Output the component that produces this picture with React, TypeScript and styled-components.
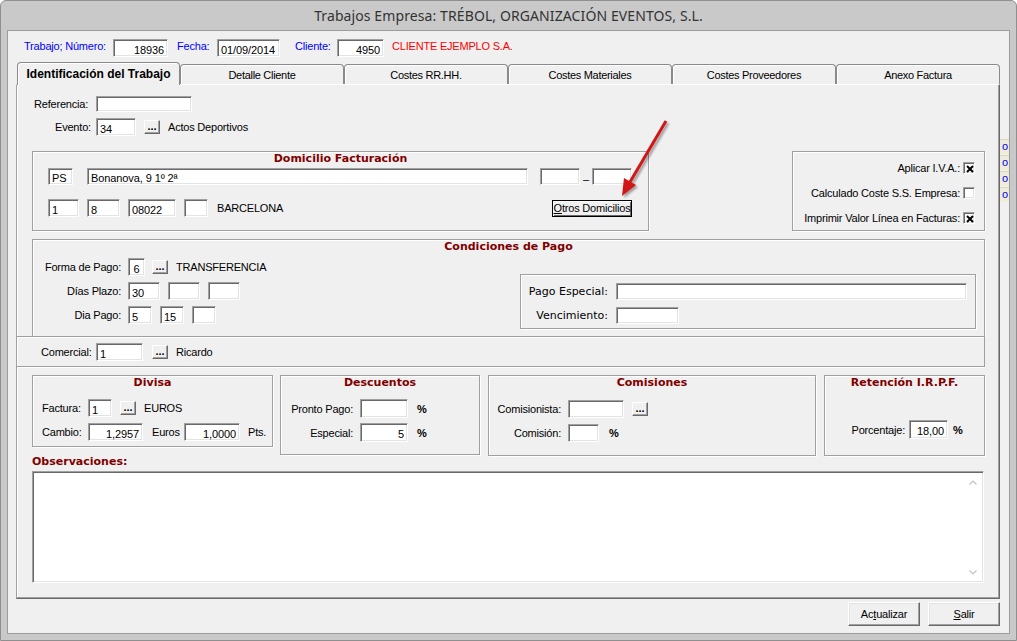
import React from "react";
import styled, { createGlobalStyle } from "styled-components";

const Global = createGlobalStyle`
  html, body { margin: 0; padding: 0; background: #ffffff; }
  body { font-family: "Liberation Sans", Arial, sans-serif; font-size: 11px; color: #000; }
  * { box-sizing: border-box; }
`;

const Window = styled.div`
  position: relative;
  width: 1017px;
  height: 641px;
  background: #c9c9c9;
  border: 1px solid #8f8f8f;
  border-radius: 6px 6px 0 0;
  display: flex;
  flex-direction: column;
  overflow: hidden;
`;

const TitleBar = styled.div`
  height: 29px;
  flex: none;
  display: flex;
  align-items: center;
  justify-content: center;
  font-family: "Noto Sans", "Open Sans", sans-serif;
  font-size: 14px;
  letter-spacing: 0.1px;
  color: #333;
  padding-bottom: 1px;
`;

const ClientWrap = styled.div`
  flex: 1;
  display: flex;
  padding: 0 6px 6px 6px;
`;

const Client = styled.div`
  flex: 1;
  background: #f0f0f0;
  border: 1px solid #9c9c9c;
  display: flex;
  flex-direction: column;
`;

const Header = styled.div`
  margin-top: 8px;
  height: 18px;
  padding-left: 16px;
  display: flex;
  align-items: center;
`;

const HeaderLabel = styled.span<{ $w?: number; $red?: boolean; $ml?: number }>`
  width: ${(p) => (p.$w ? `${p.$w}px` : "auto")};
  margin-left: ${(p) => p.$ml ?? 0}px;
  flex: none;
  color: ${(p) => (p.$red ? "#ff0000" : "#0000ff")};
  white-space: nowrap;
  letter-spacing: -0.2px;
  margin-bottom: 5px;
`;

const Main = styled.div`
  margin-top: 5px;
  display: flex;
  padding-left: 8px;
`;

const TabColumn = styled.div`
  width: 984px;
  display: flex;
  flex-direction: column;
`;

const TabStrip = styled.div`
  height: 22px;
  display: flex;
  align-items: flex-end;
  padding-left: 1px;
`;

const Tab = styled.div<{ $active?: boolean; $w: number }>`
  position: relative;
  z-index: ${(p) => (p.$active ? 2 : 1)};
  width: ${(p) => p.$w}px;
  height: ${(p) => (p.$active ? 23 : 20)}px;
  margin-bottom: ${(p) => (p.$active ? -1 : 0)}px;
  border: 1px solid #8a8a8a;
  border-bottom: none;
  border-radius: 4px 4px 0 0;
  background: #f0f0f0;
  box-shadow: inset 1px 1px 0 #fff;
  display: flex;
  align-items: center;
  justify-content: center;
  font-size: ${(p) => (p.$active ? 12 : 11)}px;
  font-weight: ${(p) => (p.$active ? 700 : 400)};
  letter-spacing: ${(p) => (p.$active ? "0" : "-0.3px")};
  white-space: nowrap;
`;

const Panel = styled.div`
  height: 515px;
  border: 1px solid;
  border-color: #fff #696969 #696969 #a0a0a0;
  box-shadow: inset -1px -1px 0 #a0a0a0, inset 1px 0 0 #fff;
  display: flex;
  flex-direction: column;
`;

const Strip = styled.div`
  width: 9px;
  padding-top: 77px;
  display: flex;
  flex-direction: column;
  gap: 1px;
`;

const HiddenBox = styled.div`
  height: 15px;
  background: #efedd8;
  border-top: 1px solid #d8d6c4;
  color: #0000ff;
  font-size: 11px;
  line-height: 13px;
  padding-left: 2px;
  overflow: hidden;
`;

const Footer = styled.div`
  margin-top: 3px;
  height: 24px;
  display: flex;
  justify-content: flex-end;
  gap: 8px;
  padding-right: 9px;
`;

const PushButton = styled.div`
  width: 72px;
  height: 24px;
  border: 1px solid;
  border-color: #fff #696969 #696969 #fff;
  box-shadow: inset -1px -1px 0 #a0a0a0, inset 1px 1px 0 #e3e3e3;
  background: #f0f0f0;
  display: flex;
  align-items: center;
  justify-content: center;
  font-size: 11px;
  letter-spacing: -0.2px;
`;

const FieldRow = styled.div<{ $mt?: number; $pl?: number; $pr?: number }>`
  display: flex;
  align-items: center;
  margin-top: ${(p) => p.$mt ?? 0}px;
  padding-left: ${(p) => p.$pl ?? 0}px;
  padding-right: ${(p) => p.$pr ?? 0}px;
  flex: none;
`;

const Label = styled.span<{ $w?: number; $right?: boolean; $mr?: number; $ml?: number; $verdana?: boolean }>`
  width: ${(p) => (p.$w ? `${p.$w}px` : "auto")};
  flex: none;
  text-align: ${(p) => (p.$right ? "right" : "left")};
  margin-right: ${(p) => p.$mr ?? 0}px;
  margin-left: ${(p) => p.$ml ?? 0}px;
  white-space: nowrap;
  font-family: ${(p) => (p.$verdana ? '"DejaVu Sans", Verdana, sans-serif' : '"Liberation Sans", Arial, sans-serif')};
  letter-spacing: ${(p) => (p.$verdana ? "0" : "-0.2px")};
  font-size: 11px;
`;

const Field = styled.div<{ $w: number; $h?: number; $align?: "left" | "right" | "center"; $ml?: number }>`
  width: ${(p) => p.$w}px;
  height: ${(p) => p.$h ?? 18}px;
  margin-left: ${(p) => p.$ml ?? 0}px;
  flex: none;
  background: #fff;
  border: 1px solid;
  border-color: #a0a0a0 #fff #fff #a0a0a0;
  box-shadow: inset 1px 1px 0 #696969, inset -1px -1px 0 #e3e3e3;
  display: flex;
  align-items: center;
  justify-content: ${(p) => (p.$align === "right" ? "flex-end" : p.$align === "center" ? "center" : "flex-start")};
  padding: 3px 3px 0 3px;
  font-size: 11px;
  line-height: 12px;
  letter-spacing: -0.1px;
  white-space: nowrap;
  overflow: hidden;
`;

const DotsButton = styled.div<{ $ml?: number }>`
  width: 16px;
  height: 14px;
  margin-left: ${(p) => p.$ml ?? 0}px;
  flex: none;
  border: 1px solid;
  border-color: #fff #696969 #696969 #fff;
  box-shadow: inset -1px -1px 0 #a0a0a0;
  background: #f0f0f0;
  display: flex;
  align-items: flex-end;
  justify-content: center;
  font-weight: 700;
  font-size: 11px;
  line-height: 11px;
  padding-bottom: 1px;
`;

const DefaultButton = styled.div`
  width: 80px;
  height: 17px;
  flex: none;
  margin-left: auto;
  margin-right: 16px;
  border: 1px solid #000;
  box-shadow: inset 1px 1px 0 #fff, inset -1px -1px 0 #696969;
  background: #f0f0f0;
  display: flex;
  align-items: center;
  justify-content: center;
  font-size: 11px;
  letter-spacing: -0.2px;
  white-space: nowrap;
  overflow: hidden;
`;

const GroupLine = styled.div<{ $mt?: number; $pl?: number; $h: number }>`
  display: flex;
  align-items: flex-start;
  margin-top: ${(p) => p.$mt ?? 0}px;
  padding-left: ${(p) => p.$pl ?? 0}px;
  height: ${(p) => p.$h}px;
  flex: none;
`;

const GroupBox = styled.div<{ $w: number; $h: number; $ml?: number; $mt?: number; $open?: boolean }>`
  width: ${(p) => p.$w}px;
  height: ${(p) => p.$h}px;
  margin-left: ${(p) => p.$ml ?? 0}px;
  margin-top: ${(p) => p.$mt ?? 0}px;
  flex: none;
  border: 1px solid #a0a0a0;
  border-bottom: ${(p) => (p.$open ? "none" : "1px solid #a0a0a0")};
  box-shadow: inset 1px 1px 0 #fff, 1px 1px 0 #fff;
  display: flex;
  flex-direction: column;
`;

const GroupTitle = styled.div`
  height: 14px;
  line-height: 14px;
  text-align: center;
  font-family: "DejaVu Sans", Verdana, sans-serif;
  font-weight: 700;
  font-size: 11px;
  color: #800000;
  white-space: nowrap;
`;

const Dash = styled.span`
  width: 12px;
  flex: none;
  text-align: center;
  padding-top: 5px;
`;

const CheckList = styled.div`
  display: flex;
  flex-direction: column;
  align-items: flex-end;
  gap: 13px;
  padding: 10px 9px 0 0;
`;

const CheckRow = styled.div`
  display: flex;
  align-items: center;
  gap: 3px;
  height: 12px;
`;

const CheckBoxBox = styled.div`
  width: 12px;
  height: 12px;
  background: #fff;
  border: 1px solid;
  border-color: #a0a0a0 #fff #fff #a0a0a0;
  box-shadow: inset 1px 1px 0 #696969, inset -1px -1px 0 #e3e3e3;
  display: flex;
  align-items: center;
  justify-content: center;
  padding: 1px 0 0 1px;
`;

const CondBody = styled.div`
  display: flex;
  margin-top: 4px;
`;

const CondLeft = styled.div`
  width: 487px;
  display: flex;
  flex-direction: column;
  gap: 6px;
`;

const PagoBox = styled.div`
  margin-top: 16px;
  width: 456px;
  height: 55px;
  border: 1px solid #a0a0a0;
  box-shadow: inset 1px 1px 0 #fff, 1px 1px 0 #fff;
  padding-top: 8px;
  display: flex;
  flex-direction: column;
`;

const ComercialBox = styled.div`
  width: 968px;
  height: 31px;
  flex: none;
  border: 1px solid #a0a0a0;
  border-left: none;
  box-shadow: 0 1px 0 #fff, inset 0 1px 0 #fff;
  display: flex;
  align-items: center;
  padding-left: 24px;
  padding-top: 1px;
`;

const Percent = styled.span<{ $ml: number }>`
  margin-left: ${(p) => p.$ml}px;
  font-weight: 700;
  font-size: 11px;
  flex: none;
`;

const ObsLabel = styled.div`
  margin: -1px 0 0 15px;
  height: 14px;
  line-height: 14px;
  font-family: "DejaVu Sans", Verdana, sans-serif;
  font-weight: 700;
  font-size: 11px;
  color: #800000;
`;

const TextArea = styled.div`
  margin: 2px 0 0 15px;
  width: 952px;
  height: 112px;
  flex: none;
  background: #fff;
  border: 1px solid;
  border-color: #a0a0a0 #fff #fff #a0a0a0;
  box-shadow: inset 1px 1px 0 #696969, inset -1px -1px 0 #e3e3e3;
  display: flex;
  justify-content: flex-end;
`;

const ScrollBar = styled.div`
  width: 20px;
  display: flex;
  flex-direction: column;
  justify-content: space-between;
  align-items: center;
  padding: 8px 0 7px;
`;

const ArrowOverlay = styled.svg`
  position: absolute;
  left: 609px;
  top: 111px;
  overflow: visible;
  pointer-events: none;
`;

const Check = ({ checked }: { checked?: boolean }) => (
  <CheckBoxBox>
    {checked && (
      <svg width="8" height="8" viewBox="0 0 8 8">
        <path d="M1 1 L7 7 M7 1 L1 7" stroke="#000" strokeWidth="2" />
      </svg>
    )}
  </CheckBoxBox>
);

const Chevron = ({ up }: { up?: boolean }) => (
  <svg width="8" height="5" viewBox="0 0 8 5">
    <path d={up ? "M0.5 4.5 L4 1 L7.5 4.5" : "M0.5 0.5 L4 4 L7.5 0.5"} stroke="#c3c3c3" strokeWidth="1.2" fill="none" />
  </svg>
);

const tabs = ["Detalle Cliente", "Costes RR.HH.", "Costes Materiales", "Costes Proveedores", "Anexo Factura"];

export default function App() {
  return (
    <>
      <Global />
      <Window>
        <TitleBar>Trabajos Empresa: TRÉBOL, ORGANIZACIÓN EVENTOS, S.L.</TitleBar>
        <ClientWrap>
          <Client>
            <Header>
              <HeaderLabel $w={89}>Trabajo; Número:</HeaderLabel>
              <Field $w={55} $align="right">18936</Field>
              <HeaderLabel $w={40} $ml={9}>Fecha:</HeaderLabel>
              <Field $w={63}>01/09/2014</Field>
              <HeaderLabel $w={42} $ml={15}>Cliente:</HeaderLabel>
              <Field $w={47} $align="right">4950</Field>
              <HeaderLabel $red $ml={8}>CLIENTE EJEMPLO S.A.</HeaderLabel>
            </Header>

            <Main>
              <TabColumn>
                <TabStrip>
                  <Tab $active $w={163}>Identificación del Trabajo</Tab>
                  {tabs.map((t) => (
                    <Tab key={t} $w={164}>{t}</Tab>
                  ))}
                </TabStrip>
                <Panel>
                  <FieldRow $mt={11} $pl={17}>
                    <Label $w={62}>Referencia:</Label>
                    <Field $w={96} $h={16} />
                  </FieldRow>
                  <FieldRow $mt={6} $pl={38}>
                    <Label $w={41}>Evento:</Label>
                    <Field $w={40}>34</Field>
                    <DotsButton $ml={8}>...</DotsButton>
                    <Label $ml={8}>Actos Deportivos</Label>
                  </FieldRow>

                  <GroupLine $mt={15} $pl={15} $h={80}>
                    <GroupBox $w={617} $h={80}>
                      <GroupTitle>Domicilio Facturación</GroupTitle>
                      <FieldRow $mt={2} $pl={15}>
                        <Field $w={25} $h={17}>PS</Field>
                        <Field $w={441} $h={17} $ml={14}>Bonanova, 9 1º 2ª</Field>
                        <Field $w={40} $h={17} $ml={12} />
                        <Dash>–</Dash>
                        <Field $w={40} $h={17} />
                      </FieldRow>
                      <FieldRow $mt={14} $pl={15}>
                        <Field $w={31}>1</Field>
                        <Field $w={33} $ml={8}>8</Field>
                        <Field $w={48} $ml={8}>08022</Field>
                        <Field $w={24} $ml={8} />
                        <Label $ml={9}>BARCELONA</Label>
                        <DefaultButton>
                          <u>O</u>tros Domicilios
                        </DefaultButton>
                      </FieldRow>
                    </GroupBox>
                    <GroupBox $w={193} $h={80} $ml={143}>
                      <CheckList>
                        <CheckRow>
                          <Label>Aplicar I.V.A.:</Label>
                          <Check checked />
                        </CheckRow>
                        <CheckRow>
                          <Label>Calculado Coste S.S. Empresa:</Label>
                          <Check />
                        </CheckRow>
                        <CheckRow>
                          <Label>Imprimir Valor Línea en Facturas:</Label>
                          <Check checked />
                        </CheckRow>
                      </CheckList>
                    </GroupBox>
                  </GroupLine>

                  <GroupBox $w={953} $h={97} $ml={15} $mt={8} $open>
                    <GroupTitle>Condiciones de Pago</GroupTitle>
                    <CondBody>
                      <CondLeft>
                        <FieldRow>
                          <Label $w={88} $right $mr={7}>Forma de Pago:</Label>
                          <Field $w={17} $align="center">6</Field>
                          <DotsButton $ml={7}>...</DotsButton>
                          <Label $ml={8}>TRANSFERENCIA</Label>
                        </FieldRow>
                        <FieldRow>
                          <Label $w={88} $right $mr={7}>Días Plazo:</Label>
                          <Field $w={32}>30</Field>
                          <Field $w={32} $ml={8} />
                          <Field $w={32} $ml={8} />
                        </FieldRow>
                        <FieldRow>
                          <Label $w={88} $right $mr={7}>Dia Pago:</Label>
                          <Field $w={24}>5</Field>
                          <Field $w={24} $ml={8}>15</Field>
                          <Field $w={24} $ml={8} />
                        </FieldRow>
                      </CondLeft>
                      <PagoBox>
                        <FieldRow>
                          <Label $w={87} $right $mr={8} $verdana>Pago Especial:</Label>
                          <Field $w={351} $h={17} />
                        </FieldRow>
                        <FieldRow $mt={7}>
                          <Label $w={87} $right $mr={8} $verdana>Vencimiento:</Label>
                          <Field $w={63} $h={17} />
                        </FieldRow>
                      </PagoBox>
                    </CondBody>
                  </GroupBox>

                  <ComercialBox>
                    <Label $w={55}>Comercial:</Label>
                    <Field $w={47}>1</Field>
                    <DotsButton $ml={9}>...</DotsButton>
                    <Label $ml={8}>Ricardo</Label>
                  </ComercialBox>

                  <GroupLine $mt={8} $pl={15} $h={81}>
                    <GroupBox $w={241} $h={72}>
                      <GroupTitle>Divisa</GroupTitle>
                      <FieldRow $mt={9} $pl={9}>
                        <Label $w={38} $right $mr={8}>Factura:</Label>
                        <Field $w={24}>1</Field>
                        <DotsButton $ml={8}>...</DotsButton>
                        <Label $ml={8}>EUROS</Label>
                      </FieldRow>
                      <FieldRow $mt={6} $pl={9}>
                        <Label $w={38} $right $mr={8}>Cambio:</Label>
                        <Field $w={55} $align="right">1,2957</Field>
                        <Label $w={32} $ml={9}>Euros</Label>
                        <Field $w={56} $align="right">1,0000</Field>
                        <Label $ml={8}>Pts.</Label>
                      </FieldRow>
                    </GroupBox>
                    <GroupBox $w={200} $h={80} $ml={7}>
                      <GroupTitle>Descuentos</GroupTitle>
                      <FieldRow $mt={9}>
                        <Label $w={72} $right $mr={7}>Pronto Pago:</Label>
                        <Field $w={48} $h={19} $align="right" />
                        <Percent $ml={9}>%</Percent>
                      </FieldRow>
                      <FieldRow $mt={5}>
                        <Label $w={72} $right $mr={7}>Especial:</Label>
                        <Field $w={48} $h={19} $align="right">5</Field>
                        <Percent $ml={9}>%</Percent>
                      </FieldRow>
                    </GroupBox>
                    <GroupBox $w={328} $h={81} $ml={8}>
                      <GroupTitle>Comisiones</GroupTitle>
                      <FieldRow $mt={10}>
                        <Label $w={72} $right $mr={7}>Comisionista:</Label>
                        <Field $w={56} />
                        <DotsButton $ml={8}>...</DotsButton>
                      </FieldRow>
                      <FieldRow $mt={6}>
                        <Label $w={72} $right $mr={7}>Comisión:</Label>
                        <Field $w={31} />
                        <Percent $ml={10}>%</Percent>
                      </FieldRow>
                    </GroupBox>
                    <GroupBox $w={161} $h={81} $ml={8}>
                      <GroupTitle>Retención I.R.P.F.</GroupTitle>
                      <FieldRow $mt={30}>
                        <Label $w={80} $right $mr={4}>Porcentaje:</Label>
                        <Field $w={39} $h={19} $align="right">18,00</Field>
                        <Percent $ml={5}>%</Percent>
                      </FieldRow>
                    </GroupBox>
                  </GroupLine>

                  <ObsLabel>Observaciones:</ObsLabel>
                  <TextArea>
                    <ScrollBar>
                      <Chevron up />
                      <Chevron />
                    </ScrollBar>
                  </TextArea>
                </Panel>
              </TabColumn>
              <Strip>
                <HiddenBox>o</HiddenBox>
                <HiddenBox>o</HiddenBox>
                <HiddenBox>o</HiddenBox>
                <HiddenBox>o</HiddenBox>
              </Strip>
            </Main>

            <Footer>
              <PushButton>
                Ac<u>t</u>ualizar
              </PushButton>
              <PushButton>
                <u>S</u>alir
              </PushButton>
            </Footer>
          </Client>
        </ClientWrap>

        <ArrowOverlay width="70" height="95" viewBox="0 0 70 95">
          <defs>
            <filter id="sh" x="-30%" y="-30%" width="160%" height="160%">
              <feDropShadow dx="2" dy="2" stdDeviation="1.2" floodColor="#000" floodOpacity="0.35" />
            </filter>
          </defs>
          <g filter="url(#sh)">
            <line x1="56" y1="9" x2="20" y2="70" stroke="#d01414" strokeWidth="3" />
            <polygon points="12,84 26,73 14,66" fill="#d01414" />
          </g>
        </ArrowOverlay>
      </Window>
    </>
  );
}
